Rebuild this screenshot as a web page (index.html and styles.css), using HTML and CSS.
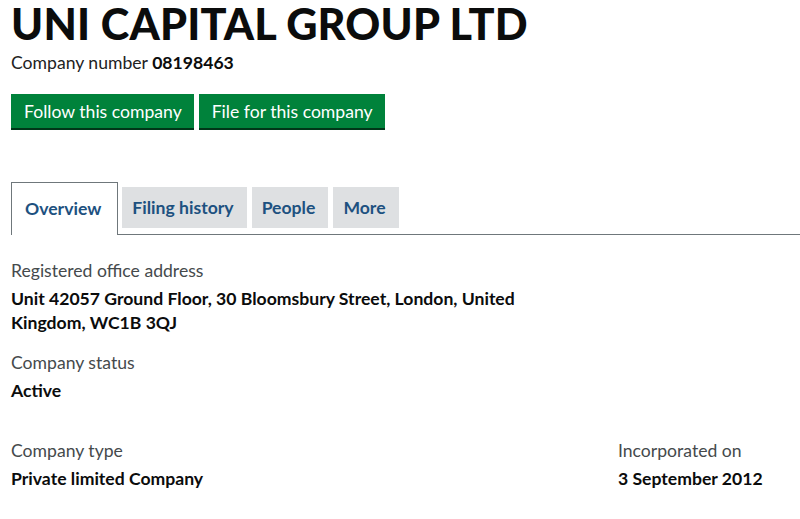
FILE: index.html
```html
<!DOCTYPE html>
<html lang="en">
<head>
<meta charset="utf-8">
<title>UNI CAPITAL GROUP LTD</title>
<link rel="stylesheet" href="styles.css">
</head>
<body>
<main class="page">
  <h1 class="title">UNI CAPITAL GROUP LTD</h1>
  <p class="number">Company number <strong>08198463</strong></p>
  <div class="actions">
    <a class="btn" href="#">Follow this company</a>
    <a class="btn" href="#">File for this company</a>
  </div>
  <nav class="tabs">
    <a class="tab tab-active" href="#">Overview</a>
    <a class="tab" href="#">Filing history</a>
    <a class="tab" href="#">People</a>
    <a class="tab" href="#">More</a>
  </nav>
  <section class="details">
    <dl class="field">
      <dt class="label">Registered office address</dt>
      <dd class="value address">Unit 42057 Ground Floor, 30 Bloomsbury Street, London, United Kingdom, WC1B 3QJ</dd>
    </dl>
    <dl class="field">
      <dt class="label">Company status</dt>
      <dd class="value">Active</dd>
    </dl>
    <div class="row">
      <dl class="field">
        <dt class="label">Company type</dt>
        <dd class="value">Private limited Company</dd>
      </dl>
      <dl class="field">
        <dt class="label">Incorporated on</dt>
        <dd class="value">3 September 2012</dd>
      </dl>
    </div>
  </section>
</main>
</body>
</html>
```
FILE: styles.css
```css
* { box-sizing: border-box; }
html, body { margin: 0; padding: 0; background: #fff; }
body {
  font-family: Lato, "Liberation Sans", sans-serif;
  color: #0b0c0c;
}
.page { padding: 0 0 0 11px; }
.title {
  margin: -2px 0 0;
  font-size: 43.2px;
  line-height: 50px;
  font-weight: 900;
  letter-spacing: 0.2px;
  color: #0b0c0c;
}
.number {
  margin: 4px 0 0;
  font-size: 17.6px;
  line-height: 22px;
  color: #222;
}
.number strong { font-weight: 700; color: #0b0c0c; }
.actions {
  display: flex;
  gap: 5px;
  margin-top: 20px;
}
.btn {
  display: block;
  height: 34px;
  padding: 0 12px 0 13px;
  background: #00823b;
  box-shadow: 0 2px 0 #003618;
  color: #fff;
  text-decoration: none;
  font-size: 17.6px;
  line-height: 36px;
}
.tabs {
  display: flex;
  align-items: flex-start;
  gap: 5px;
  margin-top: 54px;
  border-bottom: 1px solid #6f777b;
  height: 53px;
}
.tab {
  display: block;
  margin-top: 5px;
  height: 41px;
  padding: 0 13px 0 10px;
  background: #dee0e2;
  color: #1d5180;
  text-decoration: none;
  font-weight: 700;
  font-size: 17.6px;
  line-height: 41px;
}
.tab-active {
  margin-top: 0;
  margin-right: -1px;
  height: 53px;
  padding: 5px 16px 0 13px;
  background: #fff;
  border: 1px solid #6f777b;
  border-bottom: none;
  line-height: 41px;
}
.details { padding-top: 25px; }
.field { margin: 0 0 17px; }
.label {
  font-size: 17.6px;
  line-height: 22px;
  color: #454a4c;
}
.value {
  margin: 5px 0 0;
  font-size: 17.6px;
  line-height: 24px;
  font-weight: 700;
  color: #0b0c0c;
}
.address { max-width: 540px; }
.row {
  display: grid;
  grid-template-columns: 607px auto;
  margin-top: 37px;
}
```
